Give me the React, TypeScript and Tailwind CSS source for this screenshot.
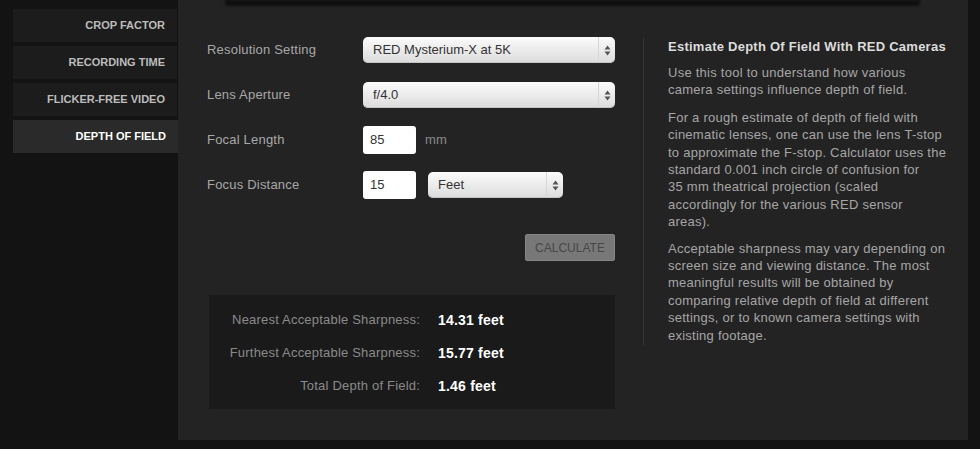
const tabs = ["CROP FACTOR", "RECORDING TIME", "FLICKER-FREE VIDEO", "DEPTH OF FIELD"];

const Arrows = () => (
  <svg width="7" height="11" viewBox="0 0 7 11" className="shrink-0">
    <path d="M3.5 0.5 L6.5 4.5 H0.5 Z" fill="#555" />
    <path d="M3.5 10.5 L6.5 6.5 H0.5 Z" fill="#555" />
  </svg>
);

const Select = ({ value, width }: { value: string; width: string }) => (
  <div
    className={`${width} h-[26px] rounded-[5px] bg-gradient-to-b from-[#fbfbfb] to-[#dcdcdc] flex items-center shadow-[inset_0_-1px_0_#c4c4c4]`}
  >
    <span className="flex-1 pl-[10px] text-[13px] text-[#333]">{value}</span>
    <div className="h-full w-[17px] border-l border-[#d6d6d6] flex items-center justify-center">
      <Arrows />
    </div>
  </div>
);

const Input = ({ value }: { value: string }) => (
  <div className="w-[53px] h-[28px] rounded-[3px] bg-white flex items-center pl-[7px] text-[13px] text-[#333]">
    {value}
  </div>
);

const Label = ({ children }: { children: string }) => (
  <span className="w-[156px] text-[13px] tracking-[0.2px] text-[#a8a8a8]">{children}</span>
);

const results = [
  ["Nearest Acceptable Sharpness:", "14.31 feet"],
  ["Furthest Acceptable Sharpness:", "15.77 feet"],
  ["Total Depth of Field:", "1.46 feet"],
];

export default function App() {
  return (
    <div className="w-[980px] h-[449px] overflow-hidden bg-[#131313] flex font-['Liberation_Sans',Arial,sans-serif]">
      {/* tabs */}
      <nav className="w-[178px] shrink-0 pt-[9px] pl-[13px] flex flex-col gap-[4px]">
        {tabs.map((t) => {
          const active = t === "DEPTH OF FIELD";
          return (
            <div
              key={t}
              className={`h-[33px] flex items-center justify-end pr-[12px] text-[11px] font-bold ${
                active ? "bg-[#2a2a2a] text-white" : "bg-[#1c1c1c] text-[#bcbcbc] mr-[1px]"
              }`}
            >
              {t}
            </div>
          );
        })}
      </nav>

      {/* main panel */}
      <main className="w-[790px] h-[440px] shrink-0 bg-[#232323] flex flex-col">
        <div className="h-[6px] ml-[47px] mr-[48px] bg-[#0f0f0f] rounded-b-[4px] blur-[1px]" />
        <div className="flex pt-[30px]">
          {/* form */}
          <section className="w-[437px] pl-[29px] flex flex-col">
            <div className="flex flex-col gap-[17px]">
              <div className="flex items-center h-[28px]">
                <Label>Resolution Setting</Label>
                <Select value="RED Mysterium-X at 5K" width="w-[252px]" />
              </div>
              <div className="flex items-center h-[28px]">
                <Label>Lens Aperture</Label>
                <Select value="f/4.0" width="w-[252px]" />
              </div>
              <div className="flex items-center h-[28px]">
                <Label>Focal Length</Label>
                <Input value="85" />
                <span className="ml-[9px] text-[13px] tracking-[0.2px] text-[#8a8a8a]">mm</span>
              </div>
              <div className="flex items-center h-[28px]">
                <Label>Focus Distance</Label>
                <Input value="15" />
                <div className="ml-[12px]">
                  <Select value="Feet" width="w-[135px]" />
                </div>
              </div>
            </div>

            <div className="flex justify-end mt-[35px]">
              <button className="w-[90px] h-[27px] rounded-[2px] bg-[#787878] border border-[#858585] text-[12px] text-[#474747]">
                CALCULATE
              </button>
            </div>

            <div className="mt-[34px] ml-[2px] h-[114px] bg-[#1a1a1a] pt-[15px] flex flex-col gap-[13px]">
              {results.map(([label, value]) => (
                <div key={label} className="flex items-center h-[20px]">
                  <span className="w-[211px] text-right text-[13px] tracking-[0.2px] text-[#8a8a8a]">{label}</span>
                  <span className="ml-[18px] text-[14px] tracking-[0.2px] font-bold text-white">{value}</span>
                </div>
              ))}
            </div>
          </section>

          {/* divider */}
          <div className="ml-[28px] mt-[2px] w-px h-[307px] bg-[#363636]" />

          {/* info */}
          <aside className="ml-[24px] w-[281px] pt-[2px] text-[13px] leading-[17.4px] tracking-[0.25px] text-[#a6a6a6]">
            <h2 className="font-bold text-[#dcdcdc] leading-[18px]">Estimate Depth Of Field With RED Cameras</h2>
            <p className="mt-[8px]">Use this tool to understand how various camera settings influence depth of field.</p>
            <p className="mt-[10px]">
              For a rough estimate of depth of field with cinematic lenses, one can use the lens T-stop to approximate the
              F-stop. Calculator uses the standard 0.001 inch circle of confusion for
              <br />
              35 mm theatrical projection (scaled
              <br />
              accordingly for the various RED sensor
              <br />
              areas).
            </p>
            <p className="mt-[9px]">
              Acceptable sharpness may vary depending on screen size and viewing distance. The most meaningful results
              will be obtained by comparing relative depth of field at different settings, or to known camera settings
              with existing footage.
            </p>
          </aside>
        </div>
      </main>
    </div>
  );
}
